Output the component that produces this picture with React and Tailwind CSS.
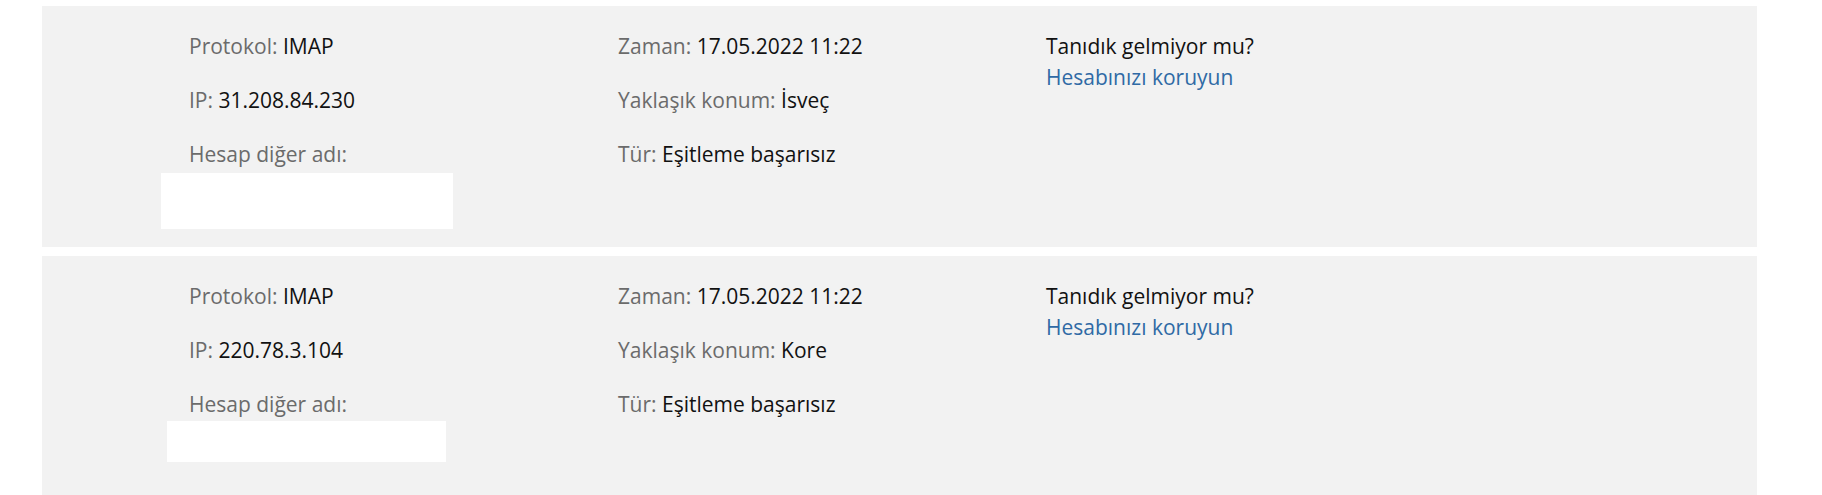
import React from "react";

const rows = [
  {
    ip: "31.208.84.230",
    loc: "İsveç",
    box: "ml-[-28px] mt-[3px] w-[292px] h-[56px]",
  },
  {
    ip: "220.78.3.104",
    loc: "Kore",
    box: "ml-[-22px] mt-[1px] w-[279px] h-[41px]",
  },
];

function Field({ label, value }) {
  return (
    <div className="leading-[31px] whitespace-nowrap">
      <span className="text-[#6b6b6b]">{label}</span>{" "}
      <span className="text-[#111111]">{value}</span>
    </div>
  );
}

function Row({ r }) {
  return (
    <div className="bg-[#f2f2f2] min-h-[241px] pl-[147px] pt-[25px] pb-[17px]">
      <div className="grid grid-cols-[429px_428px_1fr]">
        <div className="flex flex-col">
          <div className="flex flex-col gap-[23px]">
            <Field label="Protokol:" value="IMAP" />
            <Field label="IP:" value={r.ip} />
            <div className="leading-[31px] text-[#6b6b6b]">Hesap diğer adı:</div>
          </div>
          <div className={"bg-white " + r.box} />
        </div>
        <div className="flex flex-col gap-[23px]">
          <Field label="Zaman:" value="17.05.2022 11:22" />
          <Field label="Yaklaşık konum:" value={r.loc} />
          <Field label="Tür:" value="Eşitleme başarısız" />
        </div>
        <div className="flex flex-col">
          <div className="leading-[31px] text-[#111111]">Tanıdık gelmiyor mu?</div>
          <a className="leading-[31px] text-[#2f6aa5] cursor-pointer">Hesabınızı koruyun</a>
        </div>
      </div>
    </div>
  );
}

export default function App() {
  return (
    <div
      className="bg-white w-[1822px] h-[495px] overflow-hidden pt-[6px] pl-[42px] pr-[65px] text-[21px]"
      style={{ fontFamily: '"Open Sans", "Noto Sans", sans-serif' }}
    >
      <div className="flex flex-col gap-[9px]">
        {rows.map((r, i) => (
          <Row key={i} r={r} />
        ))}
      </div>
    </div>
  );
}
